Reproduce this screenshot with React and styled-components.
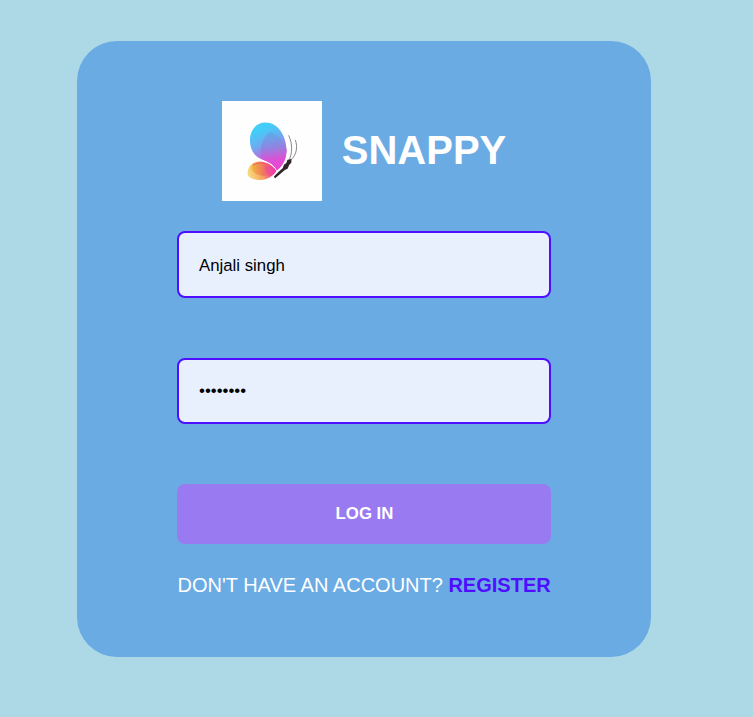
import React from "react";
import styled, { createGlobalStyle } from "styled-components";

const GlobalStyle = createGlobalStyle`
  *, *::before, *::after { box-sizing: border-box; }
  body {
    margin: 0;
    background: #add8e6;
    font-family: "Liberation Sans", Arial, sans-serif;
  }
`;

const Page = styled.main`
  width: 100%;
  height: 717px;
  padding: 41px 0 0 77px;
  overflow: hidden;
`;

const Form = styled.form`
  display: flex;
  flex-direction: column;
  width: 574px;
  height: 616px;
  padding: 60px 100px;
  border-radius: 40px;
  background: #6aabe4;
`;

const Brand = styled.div`
  display: flex;
  align-items: center;
  justify-content: center;
  gap: 20px;
  height: 100px;
  margin-bottom: 30px;
`;

const Logo = styled.svg`
  display: block;
  width: 100px;
  height: 100px;
  background: #fefefe;
`;

const Title = styled.h1`
  margin: 0 0 2px;
  color: #fff;
  font-size: 40px;
  line-height: 46px;
  text-transform: uppercase;
`;

const Field = styled.input`
  width: 100%;
  height: ${(p) => p.$height}px;
  margin: 0 0 60px;
  padding: ${(p) => p.$padding};
  border: 2px solid #4e0eff;
  border-radius: 8px;
  outline: none;
  background: #e8f0fe;
  color: #000;
  font-family: inherit;
  font-size: 16.8px;
`;

const Submit = styled.button`
  height: 60px;
  margin: 0 0 30px;
  padding: 0 0 0 1px;
  border: none;
  border-radius: 8px;
  background: #997af0;
  color: #fff;
  font-family: inherit;
  font-size: 16.8px;
  font-weight: bold;
  text-transform: uppercase;
`;

const Prompt = styled.span`
  padding-left: 0.5px;
  color: #fff;
  font-size: 20px;
  line-height: 23px;
  text-transform: uppercase;
  white-space: nowrap;
`;

const RegisterLink = styled.a`
  color: #4e0eff;
  font-weight: bold;
  text-decoration: none;
`;

function Butterfly() {
  return (
    <Logo viewBox="0 0 100 100" role="img" aria-label="Butterfly">
      <defs>
        <linearGradient id="upper" x1="0.3" y1="0" x2="0.65" y2="1">
          <stop offset="0.12" stopColor="#42cef9" />
          <stop offset="0.42" stopColor="#6faaf0" />
          <stop offset="0.74" stopColor="#d455dc" />
          <stop offset="1" stopColor="#ec45d0" />
        </linearGradient>
        <linearGradient id="inner" x1="0.45" y1="0" x2="0.55" y2="1">
          <stop offset="0" stopColor="#58aeea" />
          <stop offset="0.4" stopColor="#9184e0" />
          <stop offset="0.72" stopColor="#dc50d6" />
          <stop offset="1" stopColor="#ec45d0" />
        </linearGradient>
        <linearGradient id="lower" x1="0" y1="0.6" x2="1" y2="0.4">
          <stop offset="0" stopColor="#f8dc80" />
          <stop offset="0.45" stopColor="#f6a45e" />
          <stop offset="0.8" stopColor="#f4489c" />
          <stop offset="1" stopColor="#f03aae" />
        </linearGradient>
        <linearGradient id="lowerInner" x1="0" y1="0.5" x2="1" y2="0.5">
          <stop offset="0" stopColor="#f2b53c" />
          <stop offset="0.45" stopColor="#f07a5c" />
          <stop offset="1" stopColor="#f03cac" />
        </linearGradient>
      </defs>
      <path
        fill="url(#upper)"
        d="M55 69.2C61 65 64.7 57 64.5 48.5C64 34.5 56 21.6 43.5 21.6C34 21.6 28 29.4 28 38.9C28 46.4 31 54.2 38 57.5C44 60.2 51 62 55 69.2Z"
      />
      <path
        fill="url(#inner)"
        d="M55 69.2C61 65 64.7 57 64.5 48.5C62 40 55 32 47.5 31C41 36 37 46 39.5 58C45 60.5 51 62 55 69.2Z"
      />
      <path
        fill="url(#lower)"
        d="M54.3 70C50.5 64.2 44.5 60.6 37.5 60.6C30 60.6 25.6 66 25.6 72.3C25.6 76.8 31 79 38.5 78.9C45.5 78.7 51 75.2 54.3 70Z"
      />
      <path
        fill="url(#lowerInner)"
        d="M54.3 70C50 62.5 41 61 36 62C31 62.8 28.8 65.4 30 68.6C32.5 73.8 41 75.6 49.5 74.6C51.5 73.4 53 71.9 54.3 70Z"
      />
      <path
        fill="#f239a8"
        opacity="0.45"
        d="M54.3 70C51.5 66 47 64.5 43 64.5C42 68.5 44.5 73.4 49.5 74.6C51.5 73.4 53 71.9 54.3 70Z"
      />
      <path
        fill="none"
        stroke="#f05a62"
        strokeWidth="1"
        d="M31 64.2C37 60.2 45.5 61.9 50 66"
      />
      <path
        fill="#30252a"
        d="M51.8 75.8C55 72.3 58 69.3 60.6 67.2L62.1 63.6L64.2 62.2L65.5 58.8L69.4 57.9L69.4 61.4L67 64.2L65.8 67.6L62.5 69.2C59.3 71.6 56.5 74.6 53.1 77.2Z"
      />
      <path
        fill="none"
        stroke="#5d5357"
        strokeWidth="0.7"
        d="M67.2 59.2C70.3 51.5 70.8 43 66.6 34.3M69 59C74.8 53.5 75.8 45.5 73.3 39"
      />
    </Logo>
  );
}

export default function App() {
  return (
    <>
      <GlobalStyle />
      <Page>
        <Form onSubmit={(event) => event.preventDefault()}>
          <Brand>
            <Butterfly />
            <Title>snappy</Title>
          </Brand>
          <Field
            type="text"
            aria-label="Username"
            defaultValue="Anjali singh"
            $height={67}
            $padding="2px 20px 0"
          />
          <Field
            type="password"
            aria-label="Password"
            defaultValue="password"
            $height={66}
            $padding="0 20px"
          />
          <Submit type="submit">Log In</Submit>
          <Prompt>
            Don't have an account?{" "}
            <RegisterLink href="#register">Register</RegisterLink>
          </Prompt>
        </Form>
      </Page>
    </>
  );
}
